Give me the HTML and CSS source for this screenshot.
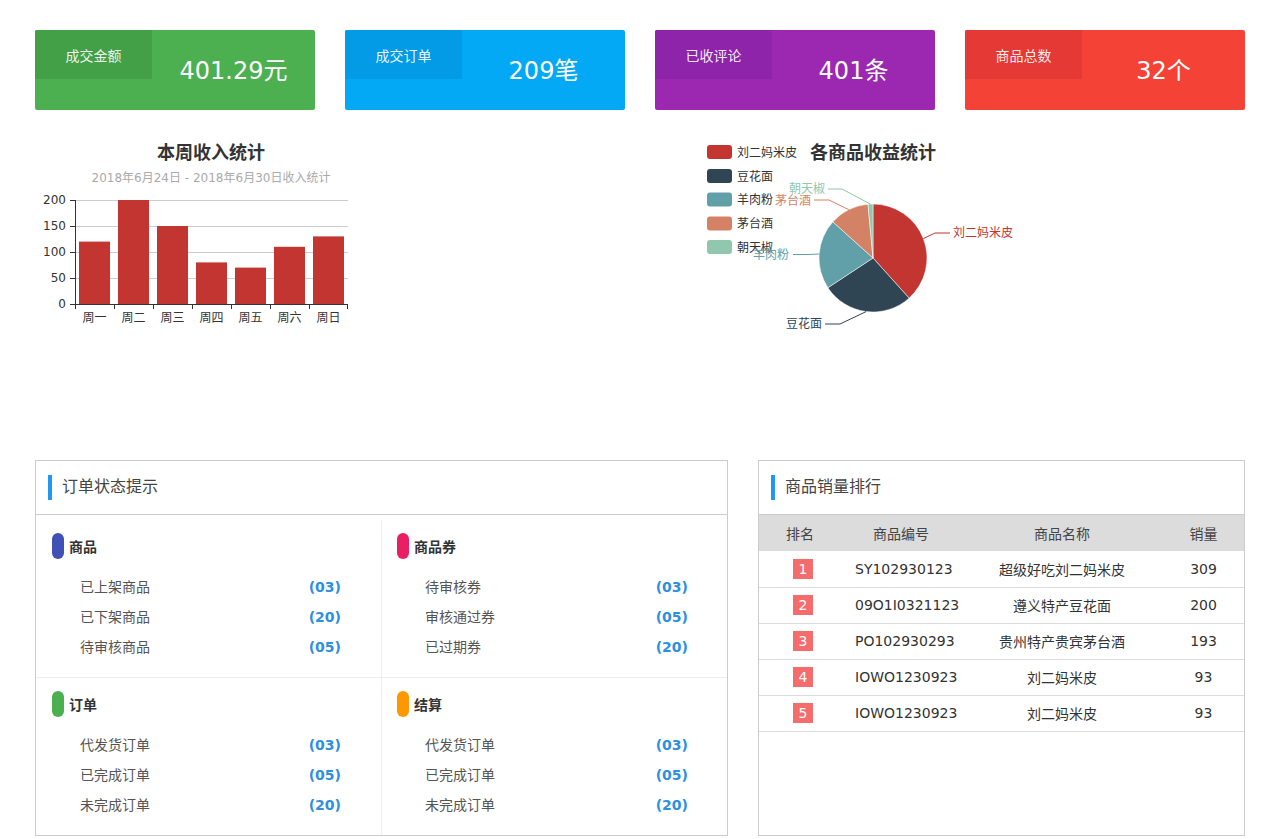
FILE: index.html
```html
<!DOCTYPE html>
<html lang="zh-CN">
<head>
<meta charset="utf-8">
<title>Dashboard</title>
<link rel="stylesheet" href="styles.css">
</head>
<body>
<div class="page">
  <div class="cards">
    <div class="card green"><div class="card-label">成交金额</div><div class="card-value">401.29元</div></div>
    <div class="card blue"><div class="card-label">成交订单</div><div class="card-value">209笔</div></div>
    <div class="card purple"><div class="card-label">已收评论</div><div class="card-value">401条</div></div>
    <div class="card red"><div class="card-label">商品总数</div><div class="card-value">32个</div></div>
  </div>

  <div class="charts">
    <svg class="chart" width="605" height="300" viewBox="0 0 605 300">
      <text class="c-title" x="176" y="24" text-anchor="middle">本周收入统计</text>
      <text class="c-sub" x="176" y="47" text-anchor="middle">2018年6月24日 - 2018年6月30日收入统计</text>
      <g stroke="#ccc" stroke-width="1">
        <line x1="40" y1="65.5" x2="313" y2="65.5"/>
        <line x1="40" y1="91.5" x2="313" y2="91.5"/>
        <line x1="40" y1="117.5" x2="313" y2="117.5"/>
        <line x1="40" y1="143.5" x2="313" y2="143.5"/>
      </g>
      <g fill="#c23531">
        <rect x="44" y="106.6" width="31" height="62.4"/>
        <rect x="83" y="65" width="31" height="104"/>
        <rect x="122" y="91" width="31" height="78"/>
        <rect x="161" y="127.4" width="31" height="41.6"/>
        <rect x="200" y="132.6" width="31" height="36.4"/>
        <rect x="239" y="111.8" width="31" height="57.2"/>
        <rect x="278" y="101.4" width="31" height="67.6"/>
      </g>
      <g stroke="#333" stroke-width="1">
        <line x1="40.5" y1="65" x2="40.5" y2="169"/>
        <line x1="40" y1="169.5" x2="313" y2="169.5"/>
        <line x1="35" y1="65.5" x2="40" y2="65.5"/>
        <line x1="35" y1="91.5" x2="40" y2="91.5"/>
        <line x1="35" y1="117.5" x2="40" y2="117.5"/>
        <line x1="35" y1="143.5" x2="40" y2="143.5"/>
        <line x1="35" y1="169.5" x2="40" y2="169.5"/>
        <line x1="40.5" y1="169" x2="40.5" y2="174"/>
        <line x1="79.5" y1="169" x2="79.5" y2="174"/>
        <line x1="118.5" y1="169" x2="118.5" y2="174"/>
        <line x1="157.5" y1="169" x2="157.5" y2="174"/>
        <line x1="196.5" y1="169" x2="196.5" y2="174"/>
        <line x1="235.5" y1="169" x2="235.5" y2="174"/>
        <line x1="274.5" y1="169" x2="274.5" y2="174"/>
        <line x1="312.5" y1="169" x2="312.5" y2="174"/>
      </g>
      <g class="c-axis" text-anchor="end">
        <text x="31" y="69">200</text>
        <text x="31" y="95">150</text>
        <text x="31" y="121">100</text>
        <text x="31" y="147">50</text>
        <text x="31" y="173">0</text>
      </g>
      <g class="c-axis" text-anchor="middle">
        <text x="59.5" y="187">周一</text>
        <text x="98.5" y="187">周二</text>
        <text x="137.5" y="187">周三</text>
        <text x="176.5" y="187">周四</text>
        <text x="215.5" y="187">周五</text>
        <text x="254.5" y="187">周六</text>
        <text x="293.5" y="187">周日</text>
      </g>
    </svg>

    <svg class="chart" width="605" height="300" viewBox="0 0 605 300">
      <g class="legend">
        <rect x="67" y="10" width="25" height="14" rx="3" fill="#c23531"/>
        <text x="97" y="21.5">刘二妈米皮</text>
        <rect x="67" y="34" width="25" height="14" rx="3" fill="#2f4554"/>
        <text x="97" y="45.5">豆花面</text>
        <rect x="67" y="57.5" width="25" height="14" rx="3" fill="#61a0a8"/>
        <text x="97" y="69">羊肉粉</text>
        <rect x="67" y="81.5" width="25" height="14" rx="3" fill="#d48265"/>
        <text x="97" y="93">茅台酒</text>
        <rect x="67" y="105" width="25" height="14" rx="3" fill="#91c7ae"/>
        <text x="97" y="116.5">朝天椒</text>
      </g>
      <text class="c-title" x="233" y="24" text-anchor="middle">各商品收益统计</text>
      <g stroke="#fff" stroke-width="0.5">
        <path d="M233,123 L233,69 A54,54 0 0,1 269.13,163.13 Z" fill="#c23531"/>
        <path d="M233,123 L269.13,163.13 A54,54 0 0,1 187.92,152.73 Z" fill="#2f4554"/>
        <path d="M233,123 L187.92,152.73 A54,54 0 0,1 192.87,86.87 Z" fill="#61a0a8"/>
        <path d="M233,123 L192.87,86.87 A54,54 0 0,1 228.01,69.23 Z" fill="#d48265"/>
        <path d="M233,123 L228.01,69.23 A54,54 0 0,1 233,69 Z" fill="#91c7ae"/>
      </g>
      <g fill="none" stroke-width="1">
        <polyline points="283.4,103.6 295,98 310,98" stroke="#c23531"/>
        <polyline points="226.1,176.6 200,189 185,189" stroke="#2f4554"/>
        <polyline points="179.2,119 168,119.5 153,119.5" stroke="#61a0a8"/>
        <polyline points="208.8,74.7 189,65 174,65" stroke="#d48265"/>
        <polyline points="230.5,69.1 202,54 188,54" stroke="#91c7ae"/>
      </g>
      <g class="pie-label">
        <text x="313" y="102" fill="#c23531">刘二妈米皮</text>
        <text x="182" y="193" fill="#2f4554" text-anchor="end">豆花面</text>
        <text x="149" y="124" fill="#61a0a8" text-anchor="end">羊肉粉</text>
        <text x="171" y="70" fill="#d48265" text-anchor="end">茅台酒</text>
        <text x="185" y="58" fill="#91c7ae" text-anchor="end">朝天椒</text>
      </g>
    </svg>
  </div>

  <div class="panels">
    <section class="panel panel-status">
      <header class="panel-head"><span class="head-bar"></span><h2>订单状态提示</h2></header>
      <div class="status-grid">
        <div class="status-cell">
          <div class="cell-title"><span class="pill indigo"></span>商品</div>
          <ul class="items">
            <li><span>已上架商品</span><b>(03)</b></li>
            <li><span>已下架商品</span><b>(20)</b></li>
            <li><span>待审核商品</span><b>(05)</b></li>
          </ul>
        </div>
        <div class="status-cell">
          <div class="cell-title"><span class="pill pink"></span>商品券</div>
          <ul class="items">
            <li><span>待审核券</span><b>(03)</b></li>
            <li><span>审核通过券</span><b>(05)</b></li>
            <li><span>已过期券</span><b>(20)</b></li>
          </ul>
        </div>
        <div class="status-cell">
          <div class="cell-title"><span class="pill green-p"></span>订单</div>
          <ul class="items">
            <li><span>代发货订单</span><b>(03)</b></li>
            <li><span>已完成订单</span><b>(05)</b></li>
            <li><span>未完成订单</span><b>(20)</b></li>
          </ul>
        </div>
        <div class="status-cell">
          <div class="cell-title"><span class="pill orange"></span>结算</div>
          <ul class="items">
            <li><span>代发货订单</span><b>(03)</b></li>
            <li><span>已完成订单</span><b>(05)</b></li>
            <li><span>未完成订单</span><b>(20)</b></li>
          </ul>
        </div>
      </div>
    </section>

    <section class="panel panel-rank">
      <header class="panel-head"><span class="head-bar"></span><h2>商品销量排行</h2></header>
      <table class="rank">
        <thead>
          <tr><th class="c1">排名</th><th class="c2">商品编号</th><th class="c3">商品名称</th><th class="c4">销量</th></tr>
        </thead>
        <tbody>
          <tr><td><span class="badge">1</span></td><td class="code">SY102930123</td><td>超级好吃刘二妈米皮</td><td>309</td></tr>
          <tr><td><span class="badge">2</span></td><td class="code">09O1I0321123</td><td>遵义特产豆花面</td><td>200</td></tr>
          <tr><td><span class="badge">3</span></td><td class="code">PO102930293</td><td>贵州特产贵宾茅台酒</td><td>193</td></tr>
          <tr><td><span class="badge">4</span></td><td class="code">IOWO1230923</td><td>刘二妈米皮</td><td>93</td></tr>
          <tr><td><span class="badge">5</span></td><td class="code">IOWO1230923</td><td>刘二妈米皮</td><td>93</td></tr>
        </tbody>
      </table>
    </section>
  </div>
</div>
</body>
</html>
```

FILE: styles.css
```css
* { box-sizing: border-box; }
html, body { margin: 0; padding: 0; background: #fff; }
body {
  font-family: "DejaVu Sans", "Noto Sans CJK SC", sans-serif;
  color: #333;
}
.page { width: 1280px; padding: 30px 35px 0; }

.cards { display: flex; gap: 30px; }
.card {
  width: 280px; height: 80px; border-radius: 2px;
  display: flex; overflow: hidden; color: #fff;
}
.card-label {
  width: 117px; height: 49px; flex: none;
  display: flex; align-items: center; justify-content: center;
  font-size: 14px; color: rgba(255,255,255,0.92);
}
.card-value {
  flex: 1; display: flex; align-items: center; justify-content: center;
  font-size: 24px; padding-bottom: 4px;
}
.green { background: #4caf50; }
.green .card-label { background: #43a047; }
.blue { background: #03a9f4; }
.blue .card-label { background: #039be5; }
.purple { background: #9c27b0; }
.purple .card-label { background: #8e24aa; }
.red { background: #f44336; }
.red .card-label { background: #e53935; }

.charts { display: flex; margin-top: 25px; height: 300px; }
.chart { display: block; }
.c-title { font-size: 18px; font-weight: bold; fill: #333; }
.c-sub { font-size: 12px; fill: #aaa; }
.c-axis { font-size: 12px; fill: #333; }
.legend text { font-size: 12px; fill: #333; }
.pie-label text { font-size: 12px; }

.panels { display: flex; gap: 30px; margin-top: 25px; }
.panel { border: 1px solid #ccc; height: 376px; background: #fff; }
.panel-status { width: 693px; }
.panel-rank { width: 487px; }
.panel-head {
  height: 54px; border-bottom: 1px solid #ccc;
  display: flex; align-items: center; padding-left: 12px;
}
.head-bar { width: 4px; height: 25px; background: #2196f3; margin-right: 10px; }
.panel-head h2 {
  margin: 0 0 1px; font-size: 16px; font-weight: normal; color: #444; line-height: 20px;
}

.status-grid {
  margin-top: 5px;
  display: grid; grid-template-columns: 346px 345px; grid-template-rows: 158px 157px;
}
.status-cell { padding: 13px 40px 0 16px; }
.status-cell:nth-child(odd) { border-right: 1px solid #eee; }
.status-cell:nth-child(-n+2) { border-bottom: 1px solid #eee; }
.status-cell:nth-child(2), .status-cell:nth-child(4) { padding-left: 15px; padding-right: 39px; }
.cell-title {
  display: flex; align-items: center; height: 26px;
  font-size: 14px; font-weight: bold; color: #333;
}
.pill { width: 12px; height: 26px; border-radius: 6px; margin-right: 5px; }
.indigo { background: #3f51b5; }
.pink { background: #e91e63; }
.green-p { background: #4caf50; }
.orange { background: #ff9800; }
.items { list-style: none; margin: 13px 0 0; padding: 0 0 0 28px; }
.items li {
  display: flex; justify-content: space-between; height: 30px; line-height: 30px;
  font-size: 14px; color: #555;
}
.items b { color: #2d8fe0; font-weight: bold; }

.rank { width: 100%; border-collapse: collapse; font-size: 14px; }
.rank th {
  height: 36px; background: #dcdcdc; font-weight: normal; color: #444; padding: 0;
}
.rank .c1 { width: 82px; }
.rank .c2 { width: 120px; }
.rank .c3 { width: 202px; }
.rank .c4 { width: 81px; }
.rank td {
  height: 36px; text-align: center; border-bottom: 1px solid #ddd; color: #333; padding: 0;
  white-space: nowrap;
}
.rank td.code { text-align: left; padding-left: 14px; }
.badge {
  display: inline-block; width: 20px; height: 20px; line-height: 20px;
  background: #f56c6c; color: #fff; font-size: 14px; vertical-align: middle;
  margin-left: 6px;
}
```
